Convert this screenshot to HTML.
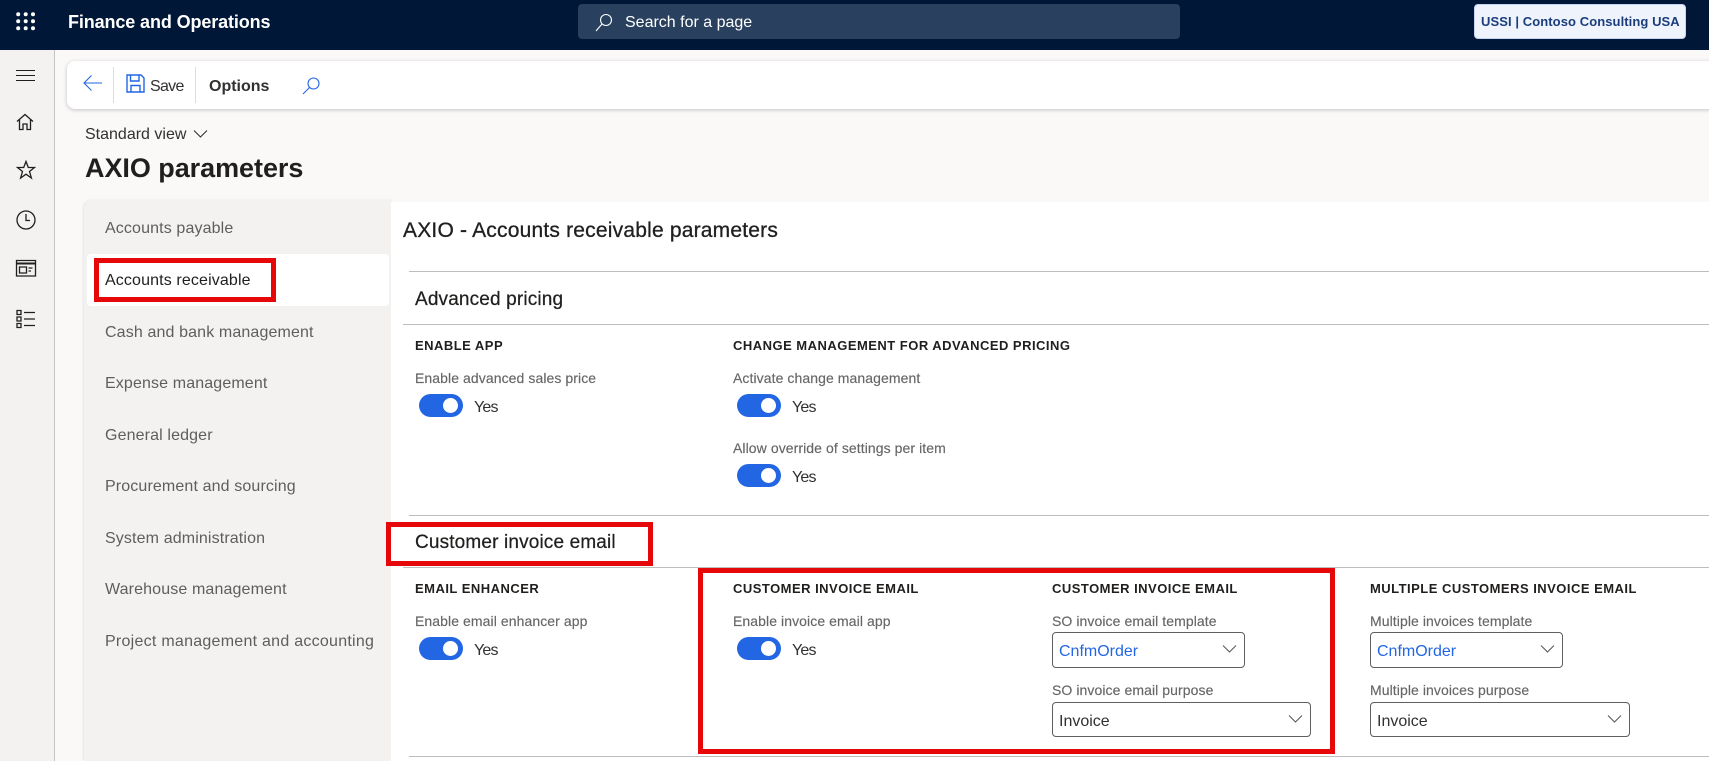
<!DOCTYPE html>
<html><head><meta charset="utf-8"><style>
html,body{margin:0;padding:0;width:1709px;height:761px;overflow:hidden;background:#faf9f8;font-family:"Liberation Sans",sans-serif}
div,svg{position:absolute}
.t{white-space:nowrap;line-height:20px;margin-top:1px}
.nav{left:105px;font-size:16px;color:#605e5c;letter-spacing:.13px}
.h{font-size:13px;font-weight:bold;color:#201f1e;letter-spacing:.48px}
.l{font-size:14px;color:#666;font-weight:normal;letter-spacing:.08px;-webkit-text-stroke:.15px #666}
.y{font-size:16px;color:#323130;letter-spacing:-.8px}
.line{height:1px;background:#bdbdbd;right:0}
.tg{width:44px;height:23px;border-radius:12px;background:#2266e3}
.tg:after{content:"";position:absolute;right:5px;top:4px;width:15px;height:15px;border-radius:50%;background:#fff}
.red{border:5px solid #e60808;box-sizing:border-box}
.dd{box-sizing:border-box;border:1px solid #5f5f5f;border-radius:4px;background:#fff;font-size:16px;line-height:37px;padding-left:6px;color:#323130}
.dd svg{right:7px;top:11px}
.s{font-size:19px;color:#201f1e;letter-spacing:.15px;-webkit-text-stroke:.25px #201f1e}
</style></head><body>
<div style="left:0;top:0;width:1709px;height:50px;background:#001737"></div>
<svg style="left:16px;top:12px" width="20" height="20" fill="#fff"><circle cx="2.200" cy="2.200" r="2"/><circle cx="9.700" cy="2.200" r="2"/><circle cx="17" cy="2.200" r="2"/><circle cx="2.200" cy="9.200" r="2"/><circle cx="9.700" cy="9.200" r="2"/><circle cx="17" cy="9.200" r="2"/><circle cx="2.200" cy="16.300" r="2"/><circle cx="9.700" cy="16.300" r="2"/><circle cx="17" cy="16.300" r="2"/></svg>
<div class="t" style="left:68px;top:11px;font-size:18px;font-weight:bold;color:#fff;letter-spacing:-.12px">Finance and Operations</div>
<div style="left:578px;top:4px;width:602px;height:35px;background:#29415f;border-radius:4px"></div>
<svg style="left:594px;top:13px" width="20" height="20" fill="none" stroke="#fff" stroke-width="1.100"><circle cx="12" cy="7" r="5.500"/><path d="M8 11L2 18"/></svg>
<div class="t" style="left:625px;top:12px;font-size:16px;color:#fff">Search for a page</div>
<div style="left:1474px;top:4px;width:212px;height:35px;box-sizing:border-box;background:#eef3fc;border:1px solid #c5d4f2;border-radius:4px"></div>
<div class="t" style="left:1481px;top:11px;font-size:13px;font-weight:bold;color:#1c3d7c;letter-spacing:.08px">USSI | Contoso Consulting USA</div>

<div style="left:0;top:50px;width:54px;height:711px;background:#f3f2f1;border-right:1px solid #c4c4c4"></div>
<svg style="left:16px;top:69px" width="20" height="14" stroke="#201f1e" stroke-width="1"><path d="M0 1.500H19M0 6.500H19M0 11.500H19"/></svg>
<svg style="left:16px;top:113px" width="18" height="18" fill="none" stroke="#201f1e" stroke-width="1.300"><path d="M1 8.500L9 1.500L17 8.500M3.500 6.500V16.500H7V11H11V16.500H14.500V6.500"/></svg>
<svg style="left:16px;top:160px" width="20" height="20" fill="none" stroke="#201f1e" stroke-width="1.300"><path d="M10 1.500L12.300 7.500H18.500L13.500 11.500L15.400 18L10 14.200L4.600 18L6.500 11.500L1.500 7.500H7.700Z"/></svg>
<svg style="left:15px;top:209px" width="22" height="22" fill="none" stroke="#201f1e" stroke-width="1.300"><circle cx="11" cy="11" r="9"/><path d="M11 5V11.500H15"/></svg>
<svg style="left:15px;top:259px" width="22" height="18" fill="none" stroke="#201f1e" stroke-width="1.300"><path d="M1.500 1.500H20.500V17H1.500Z"/><path d="M1.500 4.500H20.500" stroke-width="2"/><path d="M4.500 8H11.500V14H4.500ZM13.500 9H17.500M13.500 12H16"/></svg>
<svg style="left:15px;top:309px" width="22" height="20" fill="none" stroke="#201f1e" stroke-width="1.300"><path d="M2 1.500H6V5.500H2ZM2 8H6V12H2ZM2 14.500H6V18.500H2ZM9 3.500H20M9 10H20M9 16.500H20"/></svg>

<div style="left:67px;top:61px;width:1660px;height:48px;background:#fff;border-radius:8px;box-shadow:0 1px 4px rgba(0,0,0,.22)"></div>
<svg style="left:82px;top:74px" width="22" height="18" fill="none" stroke="#2266e3" stroke-width="1.100"><path d="M20 9H2M9.500 1.500L2 9L9.500 16.500"/></svg>
<div style="left:113px;top:67px;width:1px;height:36px;background:#ddd"></div>
<div style="left:195px;top:67px;width:1px;height:36px;background:#ddd"></div>
<svg style="left:126px;top:74px" width="19" height="19" fill="none" stroke="#2266e3" stroke-width="1.400"><path d="M1 1H15L18 4V18H1Z"/><path d="M4.500 1V7H13V1M5 18V11.500H14V18"/></svg>
<div class="t" style="left:150px;top:76px;font-size:16px;color:#323130;letter-spacing:-.7px">Save</div>
<div class="t" style="left:209px;top:76px;font-size:16px;font-weight:bold;color:#323130">Options</div>
<svg style="left:301px;top:76px" width="20" height="20" fill="none" stroke="#2266e3" stroke-width="1.100"><circle cx="12.500" cy="7.500" r="5.500"/><path d="M8.500 11.500L2 18"/></svg>

<div class="t" style="left:85px;top:124px;font-size:16px;color:#323130">Standard view</div>
<svg style="left:193px;top:129px" width="15" height="10" fill="none" stroke="#323130" stroke-width="1.100"><path d="M1 1.500L7.500 8L14 1.500"/></svg>
<div class="t" style="left:85px;top:152px;line-height:30px;font-size:27px;font-weight:bold;color:#201f1e;letter-spacing:-.05px">AXIO parameters</div>

<div style="left:84px;top:200px;width:308px;height:561px;background:#f3f2f1;border-radius:8px 0 0 0;box-shadow:-1px 0 2px rgba(0,0,0,.08)"></div>
<div style="left:391px;top:202px;width:1318px;height:559px;background:#fff"></div>
<div style="left:87px;top:254px;width:302px;height:52px;background:#fff;border-radius:4px"></div>
<div class="t nav" style="top:218px">Accounts payable</div>
<div class="t nav" style="top:270px;color:#201f1e">Accounts receivable</div>
<div class="t nav" style="top:322px">Cash and bank management</div>
<div class="t nav" style="top:373px">Expense management</div>
<div class="t nav" style="top:425px">General ledger</div>
<div class="t nav" style="top:476px">Procurement and sourcing</div>
<div class="t nav" style="top:528px">System administration</div>
<div class="t nav" style="top:579px">Warehouse management</div>
<div class="t nav" style="top:631px;letter-spacing:.26px">Project management and accounting</div>
<div class="red" style="left:94px;top:258px;width:182px;height:44px"></div>

<div class="t" style="left:403px;top:220px;font-size:21px;color:#201f1e;letter-spacing:.2px;-webkit-text-stroke:.3px #201f1e">AXIO - Accounts receivable parameters</div>
<div class="line" style="left:409px;top:271px"></div>
<div class="t s" style="left:415px;top:289px">Advanced pricing</div>
<div class="line" style="left:403px;top:324px"></div>
<div class="t h" style="left:415px;top:335px">ENABLE APP</div>
<div class="t h" style="left:733px;top:335px">CHANGE MANAGEMENT FOR ADVANCED PRICING</div>
<div class="t l" style="left:415px;top:367px">Enable advanced sales price</div>
<div class="t l" style="left:733px;top:367px">Activate change management</div>
<div class="tg" style="left:419px;top:394px"></div><div class="t y" style="left:474px;top:397px">Yes</div>
<div class="tg" style="left:737px;top:394px"></div><div class="t y" style="left:792px;top:397px">Yes</div>
<div class="t l" style="left:733px;top:437px">Allow override of settings per item</div>
<div class="tg" style="left:737px;top:464px"></div><div class="t y" style="left:792px;top:467px">Yes</div>

<div class="line" style="left:409px;top:515px"></div>
<div class="t s" style="left:415px;top:532px">Customer invoice email</div>
<div class="line" style="left:403px;top:567px"></div>
<div class="red" style="left:386px;top:522px;width:267px;height:44px"></div>
<div class="red" style="left:698px;top:568px;width:637px;height:186px"></div>

<div class="t h" style="left:415px;top:578px">EMAIL ENHANCER</div>
<div class="t l" style="left:415px;top:610px">Enable email enhancer app</div>
<div class="tg" style="left:419px;top:637px"></div><div class="t y" style="left:474px;top:640px">Yes</div>

<div class="t h" style="left:733px;top:578px">CUSTOMER INVOICE EMAIL</div>
<div class="t l" style="left:733px;top:610px">Enable invoice email app</div>
<div class="tg" style="left:737px;top:637px"></div><div class="t y" style="left:792px;top:640px">Yes</div>

<div class="t h" style="left:1052px;top:578px">CUSTOMER INVOICE EMAIL</div>
<div class="t l" style="left:1052px;top:610px">SO invoice email template</div>
<div class="dd" style="left:1052px;top:632px;width:193px;height:36px;color:#2266e3">CnfmOrder<svg width="15" height="10" fill="none" stroke="#555" stroke-width="1"><path d="M1 1.500L7.500 8L14 1.500"/></svg></div>
<div class="t l" style="left:1052px;top:679px">SO invoice email purpose</div>
<div class="dd" style="left:1052px;top:702px;width:259px;height:35px">Invoice<svg width="15" height="10" fill="none" stroke="#555" stroke-width="1"><path d="M1 1.500L7.500 8L14 1.500"/></svg></div>

<div class="t h" style="left:1370px;top:578px">MULTIPLE CUSTOMERS INVOICE EMAIL</div>
<div class="t l" style="left:1370px;top:610px">Multiple invoices template</div>
<div class="dd" style="left:1370px;top:632px;width:193px;height:36px;color:#2266e3">CnfmOrder<svg width="15" height="10" fill="none" stroke="#555" stroke-width="1"><path d="M1 1.500L7.500 8L14 1.500"/></svg></div>
<div class="t l" style="left:1370px;top:679px">Multiple invoices purpose</div>
<div class="dd" style="left:1370px;top:702px;width:260px;height:35px">Invoice<svg width="15" height="10" fill="none" stroke="#555" stroke-width="1"><path d="M1 1.500L7.500 8L14 1.500"/></svg></div>

<div class="line" style="left:409px;top:756px"></div>
</body></html>
